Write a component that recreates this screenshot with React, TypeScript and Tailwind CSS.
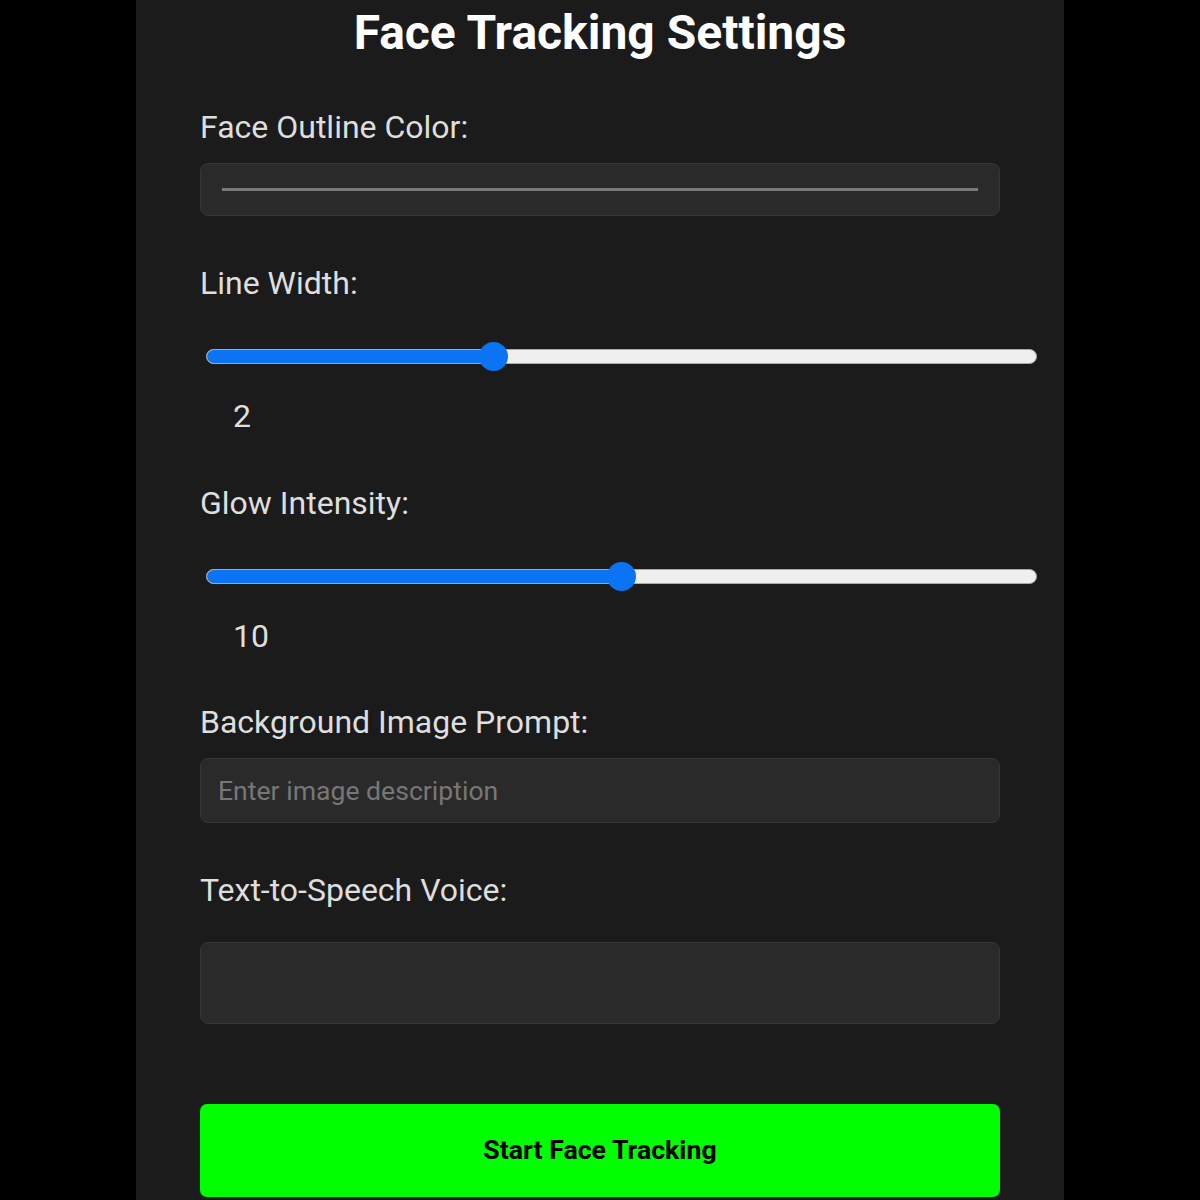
import React from "react";

function Label({ text, className }: { text: string; className: string }) {
  return (
    <div className={`text-[32px] leading-[37px] text-[#dedede] ${className}`}>{text}</div>
  );
}

function Slider({ fraction, className }: { fraction: number; className: string }) {
  // thumb center travels from 14px to (width - 14px)
  const center = 14 + fraction * (831 - 28);
  return (
    <div className={`relative ml-[6px] h-[30px] w-[831px] ${className}`}>
      <div className="absolute left-0 right-0 top-[7.5px] h-[15px] overflow-hidden rounded-full border border-[#a9a9a9] bg-[#efefef]">
        <div className="h-full bg-[#0b74f4]" style={{ width: center }} />
      </div>
      <div
        className="absolute top-[0.5px] h-[29px] w-[29px] rounded-full bg-[#0b74f4]"
        style={{ left: center - 14.5 }}
      />
    </div>
  );
}

export default function App() {
  return (
    <div className="flex min-h-[1200px] justify-center bg-black font-['Roboto',sans-serif]">
      <div className="h-[1200px] w-[928px] overflow-hidden bg-[#1b1b1b] px-[64px] pt-[5px]">
        <h1 className="text-center text-[48px] font-bold leading-[56px] text-white">
          Face Tracking Settings
        </h1>

        <Label text="Face Outline Color:" className="mt-[48px]" />
        <div className="mt-[16.5px] flex h-[53px] w-[800px] items-center rounded-[8px] border border-[#363636] bg-[#2a2a2a] px-[21px]">
          <div className="h-[3px] w-full bg-[#7a7a7a]" />
        </div>

        <Label text="Line Width:" className="mt-[49.5px]" />
        <Slider fraction={0.341} className="mt-[39.5px]" />
        <div className="ml-[33px] mt-[26.5px] text-[32px] leading-[37px] text-[#dedede]">2</div>

        <Label text="Glow Intensity:" className="mt-[50px]" />
        <Slider fraction={0.5} className="mt-[39.5px]" />
        <div className="ml-[33px] mt-[26.5px] text-[32px] leading-[37px] text-[#dedede]">10</div>

        <Label text="Background Image Prompt:" className="mt-[49px]" />
        <input
          type="text"
          placeholder="Enter image description"
          className="mt-[16.5px] block h-[65px] w-[800px] rounded-[8px] border border-[#363636] bg-[#2a2a2a] px-[17px] text-[26.6px] text-[#dedede] outline-none placeholder:text-[#777777]"
        />

        <Label text="Text-to-Speech Voice:" className="mt-[49.5px]" />
        <div className="mt-[32.5px] h-[82px] w-[800px] rounded-[8px] border border-[#363636] bg-[#2a2a2a]" />

        <button className="mt-[80px] flex h-[93px] w-[800px] items-center justify-center rounded-[7px] bg-[#00ff00] text-[26.7px] font-bold text-black">
          Start Face Tracking
        </button>
      </div>
    </div>
  );
}
